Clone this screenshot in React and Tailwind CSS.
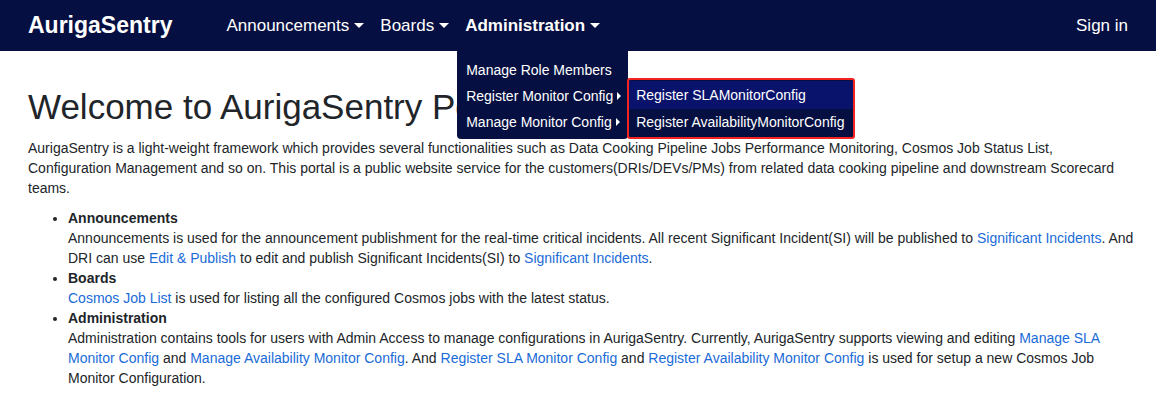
import React from 'react'

const NAVY = 'bg-[#060f42]'

function Caret() {
  return <span className="ml-[5px] inline-block w-0 h-0 border-x-[5px] border-x-transparent border-t-[5px] border-t-white align-middle" />
}

function SideCaret() {
  return <span className="ml-[4px] inline-block w-0 h-0 border-y-[4px] border-y-transparent border-l-[4px] border-l-white align-middle" />
}

function A({ children }) {
  return <a href="#" className="text-[#1a6bd8]">{children}</a>
}

export default function App() {
  return (
    <div className="min-h-[419px] bg-white text-[#212529]" style={{ fontFamily: '"Liberation Sans", Arial, sans-serif' }}>
      {/* top bar */}
      <nav className={`${NAVY} h-[51px] flex items-stretch px-[28px] text-white`}>
        <span className="self-center text-[23px] font-bold mr-[46px]">AurigaSentry</span>
        <div className="flex items-stretch text-[17px]">
          <span className="px-2 flex items-center">Announcements<Caret /></span>
          <span className="px-2 flex items-center">Boards<Caret /></span>
          <div className="relative flex items-center">
            <span className="px-2 flex items-center font-bold">Administration<Caret /></span>
            <div className={`absolute left-0 top-full w-[171px] ${NAVY} rounded-b pt-[6px] pb-[4px] text-[14px] whitespace-nowrap z-10`}>
              <div className="h-[26px] flex items-center px-[9px]">Manage Role Members</div>
              <div className="h-[26px] flex items-center px-[9px]">Register Monitor Config<SideCaret /></div>
              <div className="h-[26px] flex items-center px-[9px]">Manage Monitor Config<SideCaret /></div>
              <div className={`absolute left-[170px] top-[27px] w-[228px] ${NAVY} border-2 border-[#f2241f] rounded-[3px] py-px`}>
                <div className="h-[28px] flex items-center px-[7px] bg-[#0a136c]">Register SLAMonitorConfig</div>
                <div className="h-[27px] flex items-center px-[7px]">Register AvailabilityMonitorConfig</div>
              </div>
            </div>
          </div>
        </div>
        <span className="ml-auto self-center text-[17px]">Sign in</span>
      </nav>

      <main className="pl-[28px] w-[1136px] text-[14px] leading-[20px]">
        <h1 className="mt-[35px] mb-[10px] text-[35px] leading-[42px] font-normal">Welcome to AurigaSentry Portal</h1>
        <p className="mb-[10px]">
          AurigaSentry is a light-weight framework which provides several functionalities such as Data Cooking Pipeline Jobs Performance Monitoring, Cosmos Job Status List, Configuration Management and so on. This portal is a public website service for the customers(DRIs/DEVs/PMs) from related data cooking pipeline and downstream Scorecard teams.
        </p>
        <ul className="list-disc pl-[40px]">
          <li>
            <b>Announcements</b>
            <br />
            Announcements is used for the announcement publishment for the real-time critical incidents. All recent Significant Incident(SI) will be published to <A>Significant Incidents</A>. And DRI can use <A>Edit &amp; Publish</A> to edit and publish Significant Incidents(SI) to <A>Significant Incidents</A>.
          </li>
          <li>
            <b>Boards</b>
            <br />
            <A>Cosmos Job List</A> is used for listing all the configured Cosmos jobs with the latest status.
          </li>
          <li>
            <b>Administration</b>
            <br />
            Administration contains tools for users with Admin Access to manage configurations in AurigaSentry. Currently, AurigaSentry supports viewing and editing <A>Manage SLA Monitor Config</A> and <A>Manage Availability Monitor Config</A>. And <A>Register SLA Monitor Config</A> and <A>Register Availability Monitor Config</A> is used for setup a new Cosmos Job Monitor Configuration.
          </li>
        </ul>
      </main>
    </div>
  )
}
